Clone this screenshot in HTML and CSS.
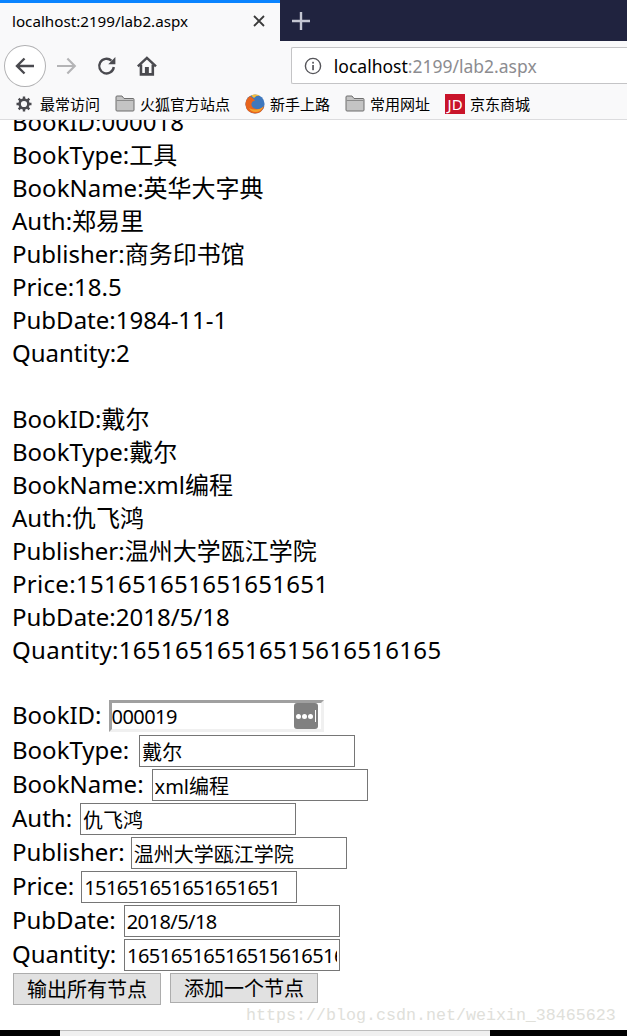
FILE: index.html
```html
<!DOCTYPE html>
<html lang="en">
<head>
    <meta charset="UTF-8">
    <meta name="viewport" content="width=device-width, initial-scale=1.0">
    <title>localhost:2199/lab2.aspx</title>
    <link rel="stylesheet" href="styles.css">
</head>
<body>
    <div class="window">
        <div class="tab-strip">
            <div class="tab">
                <span class="tab-title">localhost:2199/lab2.aspx</span>
                <svg class="tab-close" width="14" height="14" viewBox="0 0 14 14"><path d="M2 2 L12 12 M12 2 L2 12" stroke="#3a3a3a" stroke-width="1.8" fill="none"/></svg>
            </div>
            <svg class="new-tab" width="20" height="20" viewBox="0 0 20 20"><path d="M10 1 V19 M1 10 H19" stroke="#c4c6d2" stroke-width="2.4" fill="none"/></svg>
        </div>
        <div class="toolbar">
            <div class="back-button">
                <svg width="22" height="22" viewBox="0 0 22 22"><path d="M20 11 H3 M10.5 3.5 L3 11 L10.5 18.5" stroke="#4a4a4f" stroke-width="2.4" fill="none"/></svg>
            </div>
            <svg class="tool-icon" width="22" height="22" viewBox="0 0 22 22"><path d="M1 11 H19 M11.5 3.5 L19 11 L11.5 18.5" stroke="#b4b4b6" stroke-width="2.2" fill="none"/></svg>
            <svg class="tool-icon" width="20" height="20" viewBox="0 0 20 20"><path d="M17 11 A7.4 7.4 0 1 1 14.6 4.6" stroke="#4a4a4f" stroke-width="2.4" fill="none"/><path d="M18.6 1 V8.2 H11.4 Z" fill="#4a4a4f"/></svg>
            <svg class="tool-icon" width="20" height="20" viewBox="0 0 20 20"><path d="M0.8 10.4 L10 1.8 L19.2 10.4" stroke="#4a4a4f" stroke-width="2.6" fill="none"/><path d="M4 8.5 V18.5 H16 V8.5" stroke="#4a4a4f" stroke-width="2.6" fill="none"/><rect x="8" y="11" width="4" height="7" fill="#4a4a4f"/></svg>
            <div class="url-bar">
                <svg width="18" height="18" viewBox="0 0 18 18"><circle cx="9" cy="9" r="7.6" stroke="#55555a" stroke-width="1.4" fill="none"/><rect x="8.2" y="8" width="1.7" height="5.2" fill="#55555a"/><rect x="8.2" y="4.8" width="1.7" height="1.8" fill="#55555a"/></svg>
                <span class="url-text">localhost<span class="url-rest">:2199/lab2.aspx</span></span>
            </div>
        </div>
        <div class="bookmarks">
            <div class="bookmark">
                <svg width="16" height="16" viewBox="0 0 16 16"><circle cx="8" cy="8" r="4.4" stroke="#4a4a4f" stroke-width="2.6" fill="none"/><path d="M8 0.5 V3.5 M8 12.5 V15.5 M0.5 8 H3.5 M12.5 8 H15.5 M2.7 2.7 L4.8 4.8 M11.2 11.2 L13.3 13.3 M13.3 2.7 L11.2 4.8 M4.8 11.2 L2.7 13.3" stroke="#4a4a4f" stroke-width="2.4" fill="none"/></svg>
                <span>最常访问</span>
            </div>
            <div class="bookmark">
                <svg width="20" height="17" viewBox="0 0 20 17"><path d="M1 15 V2 Q1 1 2 1 H7 L9 3.5 H18 Q19 3.5 19 4.5 V15 Q19 16 18 16 H2 Q1 16 1 15 Z" fill="#c4c4c4" stroke="#6e6e6e"/><path d="M1.5 5.5 H18.5" stroke="#8a8a8a"/></svg>
                <span>火狐官方站点</span>
            </div>
            <div class="bookmark">
                <svg width="20" height="20" viewBox="0 0 20 20"><circle cx="10" cy="10" r="9.6" fill="#3f78bd"/><path d="M5 2 Q0 6 0.5 11 Q1.5 19 10 19.6 Q17 19.5 19.4 12 Q16 16 11 15 Q6 14 6.5 9.5 Q7 7 10 6.5 Q8 4 5 2 Z" fill="#e8641c"/><path d="M10 15.5 Q15 16 18.5 12.5 Q16 18 10.5 18 Q6 18 4 14 Q7 15.5 10 15.5 Z" fill="#f4a32c"/><path d="M6 1.6 Q10 -0.6 15 1.6 Q11 1.5 9 4 Z" fill="#f6bd3a"/></svg>
                <span>新手上路</span>
            </div>
            <div class="bookmark">
                <svg width="20" height="17" viewBox="0 0 20 17"><path d="M1 15 V2 Q1 1 2 1 H7 L9 3.5 H18 Q19 3.5 19 4.5 V15 Q19 16 18 16 H2 Q1 16 1 15 Z" fill="#c4c4c4" stroke="#6e6e6e"/><path d="M1.5 5.5 H18.5" stroke="#8a8a8a"/></svg>
                <span>常用网址</span>
            </div>
            <div class="bookmark">
                <span class="jd-logo">JD</span>
                <span>京东商城</span>
            </div>
        </div>
        <div class="page">
            <div class="records">
                <div>BookID:000018</div>
                <div>BookType:工具</div>
                <div>BookName:英华大字典</div>
                <div>Auth:郑易里</div>
                <div>Publisher:商务印书馆</div>
                <div>Price:18.5</div>
                <div>PubDate:1984-11-1</div>
                <div>Quantity:2</div>
                <div class="blank"></div>
                <div>BookID:戴尔</div>
                <div>BookType:戴尔</div>
                <div>BookName:xml编程</div>
                <div>Auth:仇飞鸿</div>
                <div>Publisher:温州大学瓯江学院</div>
                <div class="long-number">Price:151651651651651651</div>
                <div>PubDate:2018/5/18</div>
                <div class="long-number">Quantity:16516516516515616516165</div>
                <div class="blank"></div>
            </div>
            <form class="book-form">
                <label class="form-row first-row">BookID:
                    <span class="id-field">
                        <input class="id-input num-input" type="text" value="000019">
                        <span class="id-button"><i></i><i></i><i></i></span>
                    </span>
                </label>
                <label class="form-row">BookType: <input class="push-right" type="text" value="戴尔"></label>
                <label class="form-row">BookName: <input type="text" value="xml编程"></label>
                <label class="form-row">Auth: <input type="text" value="仇飞鸿"></label>
                <label class="form-row">Publisher: <input class="pull-left" type="text" value="温州大学瓯江学院"></label>
                <label class="form-row">Price: <input class="num-input nudge-left" type="text" value="151651651651651651"></label>
                <label class="form-row">PubDate: <input class="num-input" type="text" value="2018/5/18"></label>
                <label class="form-row">Quantity: <input class="num-input" type="text" value="16516516516515616516165"></label>
                <div class="form-buttons">
                    <button type="button" class="tall-button">输出所有节点</button>
                    <button type="button">添加一个节点</button>
                </div>
            </form>
        </div>
        <div class="bottom-bar"><div class="scroll-thumb"></div></div>
        <div class="watermark">https://blog.csdn.net/weixin_38465623</div>
    </div>
</body>
</html>
```

FILE: styles.css
```css
* {
    box-sizing: border-box;
}
body {
    margin: 0;
    padding: 0;
    background-color: #fff;
    color: #000;
    font-family: "Noto Sans", "Noto Sans CJK SC", sans-serif;
}
.window {
    position: relative;
    display: flex;
    flex-direction: column;
    height: 1036px;
    overflow: hidden;
}
.tab-strip {
    display: flex;
    align-items: center;
    height: 41px;
    background-color: #20233f;
}
.tab {
    display: flex;
    align-items: center;
    justify-content: space-between;
    width: 280px;
    height: 41px;
    padding: 0 14px 2px 12px;
    background-color: #f9f9fa;
    border-top: 3px solid #0a84ff;
}
.tab-title {
    font-size: 15.2px;
}
.new-tab {
    margin-left: 11px;
}
.toolbar {
    display: flex;
    align-items: center;
    height: 49px;
    padding-left: 4px;
    background-color: #f9f9fa;
}
.back-button {
    display: flex;
    align-items: center;
    justify-content: center;
    width: 42px;
    height: 42px;
    background-color: #fff;
    border: 1px solid #b1b1b3;
    border-radius: 50%;
}
.tool-icon {
    margin-left: 10px;
}
.tool-icon + .tool-icon {
    margin-left: 20px;
}
.url-bar {
    display: flex;
    align-items: center;
    gap: 12px;
    width: 340px;
    height: 37px;
    margin-left: 134px;
    padding-left: 12px;
    background-color: #fff;
    border: 1px solid #c4c4c6;
    border-right: none;
    border-radius: 2px 0 0 2px;
}
.url-text {
    font-size: 17.5px;
}
.url-rest {
    color: #8c8c90;
}
.bookmarks {
    display: flex;
    align-items: center;
    gap: 15px;
    height: 30px;
    padding: 0 0 2px 16px;
    background-color: #f9f9fa;
    border-bottom: 1px solid #dcdcde;
}
.bookmark {
    display: flex;
    align-items: center;
    gap: 5px;
    font-size: 15px;
}
.bookmark:first-child {
    gap: 8px;
}
.jd-logo {
    display: flex;
    align-items: center;
    justify-content: center;
    width: 20px;
    height: 20px;
    background-color: #c9142a;
    color: #fff;
    font-size: 15px;
    font-weight: 400;
}
.page {
    flex: 1;
    overflow: hidden;
    padding: 0 12px;
    font-size: 24px;
    line-height: 33px;
}
.records {
    margin-top: -15px;
}
.long-number {
    letter-spacing: 0.3px;
}
.blank {
    height: 33px;
}
.book-form {
    display: flex;
    flex-direction: column;
}
.form-row {
    display: flex;
    align-items: flex-start;
    gap: 8px;
    height: 34px;
    line-height: 31px;
}
.first-row {
    gap: 7px;
    height: 35px;
}
.form-row input {
    width: 216px;
    height: 32px;
    margin-top: 1px;
    padding: 0 2px;
    border: 1px solid #767676;
    background-color: #fff;
    font-family: "Noto Sans", "Noto Sans CJK SC", sans-serif;
    font-size: 20px;
    color: #000;
}
.form-row .num-input {
    letter-spacing: -0.55px;
}
.form-row .push-right {
    margin-left: 2px;
}
.form-row .pull-left {
    margin-left: -2px;
}
.form-row .nudge-left {
    margin-left: -1px;
}
.id-field {
    display: flex;
    align-items: center;
    width: 215px;
    height: 32px;
    margin-top: 1px;
    padding-right: 3px;
    background-color: #fff;
    border: 3px solid #f0f0f0;
    border-top-color: #a0a0a0;
    border-left-color: #a0a0a0;
}
.form-row .id-input {
    flex: 1;
    width: 100%;
    min-width: 0;
    height: 26px;
    margin-top: 0;
    padding: 0;
    border: none;
}
.id-button {
    display: flex;
    align-items: center;
    justify-content: center;
    gap: 1px;
    flex: none;
    width: 24px;
    height: 26px;
    background-color: #808080;
    border-radius: 3px;
}
.id-button i {
    width: 5px;
    height: 5px;
    background-color: #fff;
    border-radius: 50%;
}
.id-button::after {
    content: "";
    width: 1px;
    height: 12px;
    margin-left: 1px;
    background-color: #fff;
}
.form-buttons {
    display: flex;
    align-items: flex-start;
    gap: 9px;
    margin-top: 1px;
    margin-left: 1px;
}
.form-buttons button {
    width: 148px;
    height: 30px;
    padding: 0;
    background-color: #e1e1e1;
    border: 1px solid #adadad;
    font-family: "Noto Sans CJK SC", sans-serif;
    font-size: 20px;
    line-height: 1;
    color: #000;
}
.form-buttons .tall-button {
    height: 32px;
}
.bottom-bar {
    height: 6px;
    background-color: #000;
}
.scroll-thumb {
    width: 430px;
    height: 6px;
    margin-left: 60px;
    background-color: #f0f0f0;
    border-top: 1px solid #bdbdbd;
}
.watermark {
    position: absolute;
    left: 246px;
    top: 1005px;
    font-family: "Liberation Mono", monospace;
    font-size: 16.67px;
    line-height: 22px;
    color: #e0e0da;
}
```
